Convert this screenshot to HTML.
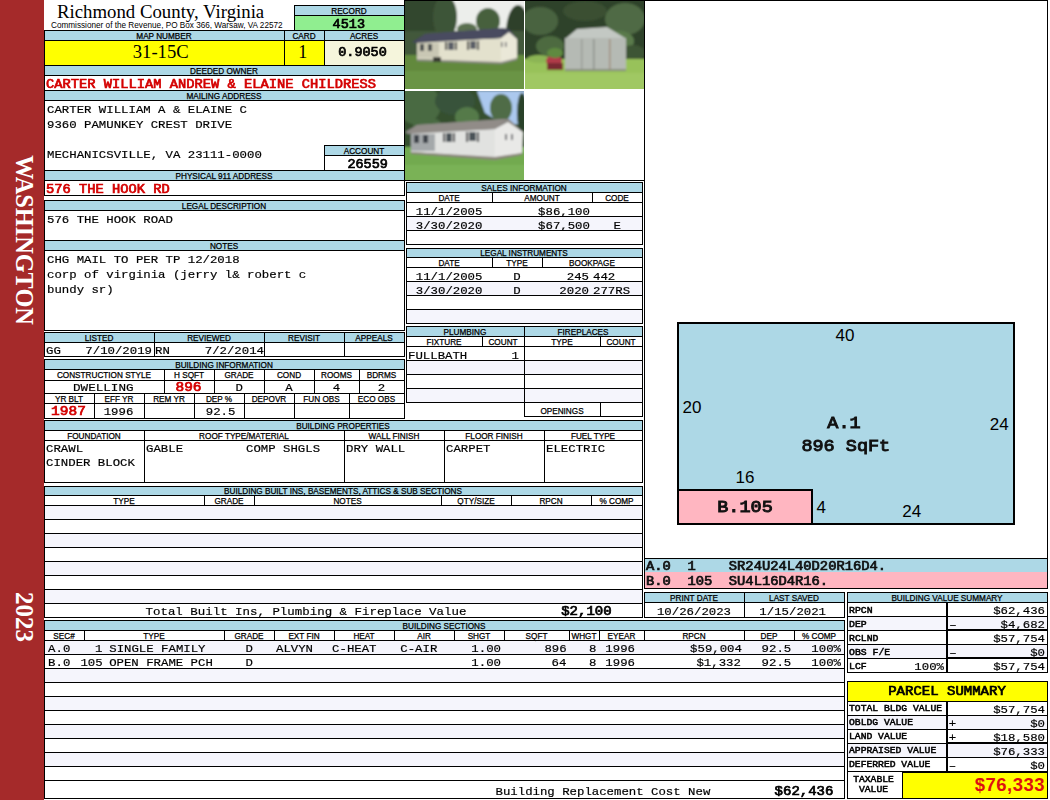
<!DOCTYPE html>
<html><head><meta charset="utf-8"><style>
html,body{margin:0;padding:0;background:#fff;overflow:hidden;}
body{width:1050px;height:800px;position:relative;overflow:hidden;}
body>div{position:absolute;}
</style></head><body>
<div style="left:0px;top:0px;width:44px;height:800px;background:#a52a2a"></div>
<div style="left:57px;top:-1px;width:237px;height:26px;line-height:26px;font-family:'Liberation Serif',serif;font-size:18.8px;font-weight:normal;color:#000;text-align:left;white-space:pre;">Richmond County, Virginia</div>
<div style="left:51px;top:20px;width:249px;height:11px;line-height:11px;font-family:'Liberation Sans',sans-serif;font-size:8.2px;font-weight:normal;color:#000;text-align:left;white-space:pre;">Commissioner of the Revenue, PO Box 366, Warsaw, VA 22572</div>
<div style="left:295px;top:6px;width:109px;height:9px;background:#add8e6"></div>
<div style="left:295px;top:16px;width:109px;height:14px;background:#90ee90"></div>
<div style="left:294px;top:5px;width:111px;height:1px;background:#000"></div>
<div style="left:294px;top:15px;width:111px;height:1px;background:#000"></div>
<div style="left:294px;top:5px;width:1px;height:26px;background:#000"></div>
<div style="left:294px;top:6px;width:110px;height:11px;line-height:11px;font-family:'Liberation Sans',sans-serif;font-size:8.2px;font-weight:normal;color:#000;text-align:center;white-space:pre;-webkit-text-stroke:0.25px #000;">RECORD</div>
<div style="left:248.80px;top:15px;width:200px;height:19px;line-height:19px;font-family:'Liberation Mono',monospace;font-size:13.5px;font-weight:normal;color:#000;text-align:center;white-space:pre;transform:scaleY(0.92);transform-origin:50% 13px;-webkit-text-stroke:0.74px #000;">4513</div>
<div style="left:45px;top:31px;width:359px;height:9px;background:#add8e6"></div>
<div style="left:45px;top:41px;width:279px;height:24px;background:#ffff00"></div>
<div style="left:325px;top:41px;width:79px;height:24px;background:#f5f5dc"></div>
<div style="left:44px;top:30px;width:361px;height:1px;background:#000"></div>
<div style="left:44px;top:40px;width:361px;height:1px;background:#000"></div>
<div style="left:44px;top:65px;width:361px;height:1px;background:#000"></div>
<div style="left:44px;top:30px;width:1px;height:36px;background:#000"></div>
<div style="left:284px;top:30px;width:1px;height:36px;background:#000"></div>
<div style="left:324px;top:30px;width:1px;height:36px;background:#000"></div>
<div style="left:44px;top:31px;width:240px;height:11px;line-height:11px;font-family:'Liberation Sans',sans-serif;font-size:8.2px;font-weight:normal;color:#000;text-align:center;white-space:pre;-webkit-text-stroke:0.25px #000;">MAP NUMBER</div>
<div style="left:284px;top:31px;width:40px;height:11px;line-height:11px;font-family:'Liberation Sans',sans-serif;font-size:8.2px;font-weight:normal;color:#000;text-align:center;white-space:pre;-webkit-text-stroke:0.25px #000;">CARD</div>
<div style="left:324px;top:31px;width:80px;height:11px;line-height:11px;font-family:'Liberation Sans',sans-serif;font-size:8.2px;font-weight:normal;color:#000;text-align:center;white-space:pre;-webkit-text-stroke:0.25px #000;">ACRES</div>
<div style="left:60.70px;top:39px;width:200px;height:26px;line-height:26px;font-family:'Liberation Serif',serif;font-size:18.6px;font-weight:normal;color:#000;text-align:center;white-space:pre;">31-15C</div>
<div style="left:202.70px;top:40px;width:200px;height:25px;line-height:25px;font-family:'Liberation Serif',serif;font-size:18px;font-weight:normal;color:#000;text-align:center;white-space:pre;">1</div>
<div style="left:262.50px;top:43px;width:200px;height:19px;line-height:19px;font-family:'Liberation Mono',monospace;font-size:13.5px;font-weight:normal;color:#000;text-align:center;white-space:pre;transform:scaleY(0.92);transform-origin:50% 13px;-webkit-text-stroke:0.74px #000;">0.9050</div>
<div style="left:45px;top:66px;width:359px;height:9px;background:#add8e6"></div>
<div style="left:44px;top:75px;width:361px;height:1px;background:#000"></div>
<div style="left:44px;top:90px;width:361px;height:1px;background:#000"></div>
<div style="left:44px;top:65px;width:1px;height:26px;background:#000"></div>
<div style="left:44px;top:66px;width:360px;height:11px;line-height:11px;font-family:'Liberation Sans',sans-serif;font-size:8.2px;font-weight:normal;color:#000;text-align:center;white-space:pre;-webkit-text-stroke:0.25px #000;">DEEDED OWNER</div>
<div style="left:46px;top:75px;width:358px;height:19px;line-height:19px;font-family:'Liberation Mono',monospace;font-size:13.75px;font-weight:normal;color:#d40000;text-align:left;white-space:pre;transform:scaleY(0.92);transform-origin:50% 13px;-webkit-text-stroke:0.76px #d40000;">CARTER WILLIAM ANDREW &amp; ELAINE CHILDRESS</div>
<div style="left:45px;top:91px;width:359px;height:9px;background:#add8e6"></div>
<div style="left:44px;top:100px;width:361px;height:1px;background:#000"></div>
<div style="left:44px;top:170px;width:361px;height:1px;background:#000"></div>
<div style="left:44px;top:90px;width:1px;height:106px;background:#000"></div>
<div style="left:44px;top:91px;width:360px;height:11px;line-height:11px;font-family:'Liberation Sans',sans-serif;font-size:8.2px;font-weight:normal;color:#000;text-align:center;white-space:pre;-webkit-text-stroke:0.25px #000;">MAILING ADDRESS</div>
<div style="left:47px;top:102px;width:357px;height:17px;line-height:17px;font-family:'Liberation Mono',monospace;font-size:12.35px;font-weight:normal;color:#000;text-align:left;white-space:pre;transform:scaleY(0.92);transform-origin:50% 11px;-webkit-text-stroke:0.2px #000;">CARTER WILLIAM A &amp; ELAINE C</div>
<div style="left:47px;top:117px;width:357px;height:17px;line-height:17px;font-family:'Liberation Mono',monospace;font-size:12.35px;font-weight:normal;color:#000;text-align:left;white-space:pre;transform:scaleY(0.92);transform-origin:50% 11px;-webkit-text-stroke:0.2px #000;">9360 PAMUNKEY CREST DRIVE</div>
<div style="left:47px;top:147px;width:357px;height:17px;line-height:17px;font-family:'Liberation Mono',monospace;font-size:12.35px;font-weight:normal;color:#000;text-align:left;white-space:pre;transform:scaleY(0.92);transform-origin:50% 11px;-webkit-text-stroke:0.2px #000;">MECHANICSVILLE, VA 23111-0000</div>
<div style="left:325px;top:146px;width:79px;height:9px;background:#add8e6"></div>
<div style="left:324px;top:145px;width:81px;height:1px;background:#000"></div>
<div style="left:324px;top:155px;width:81px;height:1px;background:#000"></div>
<div style="left:324px;top:145px;width:1px;height:26px;background:#000"></div>
<div style="left:324px;top:146px;width:80px;height:11px;line-height:11px;font-family:'Liberation Sans',sans-serif;font-size:8.2px;font-weight:normal;color:#000;text-align:center;white-space:pre;-webkit-text-stroke:0.25px #000;">ACCOUNT</div>
<div style="left:267.70px;top:155px;width:200px;height:19px;line-height:19px;font-family:'Liberation Mono',monospace;font-size:13.5px;font-weight:normal;color:#000;text-align:center;white-space:pre;transform:scaleY(0.92);transform-origin:50% 13px;-webkit-text-stroke:0.74px #000;">26559</div>
<div style="left:45px;top:171px;width:359px;height:9px;background:#add8e6"></div>
<div style="left:44px;top:180px;width:361px;height:1px;background:#000"></div>
<div style="left:44px;top:195px;width:361px;height:1px;background:#000"></div>
<div style="left:44px;top:171px;width:360px;height:11px;line-height:11px;font-family:'Liberation Sans',sans-serif;font-size:8.2px;font-weight:normal;color:#000;text-align:center;white-space:pre;-webkit-text-stroke:0.25px #000;">PHYSICAL 911 ADDRESS</div>
<div style="left:46px;top:180px;width:358px;height:19px;line-height:19px;font-family:'Liberation Mono',monospace;font-size:13.75px;font-weight:normal;color:#d40000;text-align:left;white-space:pre;transform:scaleY(0.92);transform-origin:50% 13px;-webkit-text-stroke:0.76px #d40000;">576 THE HOOK RD</div>
<div style="left:404px;top:0px;width:1px;height:196px;background:#000"></div>
<div style="left:45px;top:201px;width:359px;height:9px;background:#add8e6"></div>
<div style="left:45px;top:241px;width:359px;height:9px;background:#add8e6"></div>
<div style="left:44px;top:200px;width:361px;height:1px;background:#000"></div>
<div style="left:44px;top:210px;width:361px;height:1px;background:#000"></div>
<div style="left:44px;top:240px;width:361px;height:1px;background:#000"></div>
<div style="left:44px;top:250px;width:361px;height:1px;background:#000"></div>
<div style="left:44px;top:330px;width:361px;height:1px;background:#000"></div>
<div style="left:44px;top:200px;width:1px;height:131px;background:#000"></div>
<div style="left:404px;top:200px;width:1px;height:131px;background:#000"></div>
<div style="left:44px;top:201px;width:360px;height:11px;line-height:11px;font-family:'Liberation Sans',sans-serif;font-size:8.2px;font-weight:normal;color:#000;text-align:center;white-space:pre;-webkit-text-stroke:0.25px #000;">LEGAL DESCRIPTION</div>
<div style="left:47px;top:212px;width:357px;height:17px;line-height:17px;font-family:'Liberation Mono',monospace;font-size:12.35px;font-weight:normal;color:#000;text-align:left;white-space:pre;transform:scaleY(0.92);transform-origin:50% 11px;-webkit-text-stroke:0.2px #000;">576 THE HOOK ROAD</div>
<div style="left:44px;top:241px;width:360px;height:11px;line-height:11px;font-family:'Liberation Sans',sans-serif;font-size:8.2px;font-weight:normal;color:#000;text-align:center;white-space:pre;-webkit-text-stroke:0.25px #000;">NOTES</div>
<div style="left:47px;top:252px;width:357px;height:17px;line-height:17px;font-family:'Liberation Mono',monospace;font-size:12.35px;font-weight:normal;color:#000;text-align:left;white-space:pre;transform:scaleY(0.92);transform-origin:50% 11px;-webkit-text-stroke:0.2px #000;">CHG MAIL TO PER TP 12/2018</div>
<div style="left:47px;top:267px;width:357px;height:17px;line-height:17px;font-family:'Liberation Mono',monospace;font-size:12.35px;font-weight:normal;color:#000;text-align:left;white-space:pre;transform:scaleY(0.92);transform-origin:50% 11px;-webkit-text-stroke:0.2px #000;">corp of virginia (jerry l&amp; robert c</div>
<div style="left:47px;top:282px;width:357px;height:17px;line-height:17px;font-family:'Liberation Mono',monospace;font-size:12.35px;font-weight:normal;color:#000;text-align:left;white-space:pre;transform:scaleY(0.92);transform-origin:50% 11px;-webkit-text-stroke:0.2px #000;">bundy sr)</div>
<div style="left:45px;top:333px;width:359px;height:9px;background:#add8e6"></div>
<div style="left:44px;top:332px;width:361px;height:1px;background:#000"></div>
<div style="left:44px;top:342px;width:361px;height:1px;background:#000"></div>
<div style="left:44px;top:356px;width:361px;height:1px;background:#000"></div>
<div style="left:44px;top:332px;width:1px;height:25px;background:#000"></div>
<div style="left:154px;top:332px;width:1px;height:25px;background:#000"></div>
<div style="left:264px;top:332px;width:1px;height:25px;background:#000"></div>
<div style="left:344px;top:332px;width:1px;height:25px;background:#000"></div>
<div style="left:404px;top:332px;width:1px;height:25px;background:#000"></div>
<div style="left:44px;top:333px;width:110px;height:11px;line-height:11px;font-family:'Liberation Sans',sans-serif;font-size:8.2px;font-weight:normal;color:#000;text-align:center;white-space:pre;-webkit-text-stroke:0.25px #000;">LISTED</div>
<div style="left:154px;top:333px;width:110px;height:11px;line-height:11px;font-family:'Liberation Sans',sans-serif;font-size:8.2px;font-weight:normal;color:#000;text-align:center;white-space:pre;-webkit-text-stroke:0.25px #000;">REVIEWED</div>
<div style="left:264px;top:333px;width:80px;height:11px;line-height:11px;font-family:'Liberation Sans',sans-serif;font-size:8.2px;font-weight:normal;color:#000;text-align:center;white-space:pre;-webkit-text-stroke:0.25px #000;">REVISIT</div>
<div style="left:344px;top:333px;width:60px;height:11px;line-height:11px;font-family:'Liberation Sans',sans-serif;font-size:8.2px;font-weight:normal;color:#000;text-align:center;white-space:pre;-webkit-text-stroke:0.25px #000;">APPEALS</div>
<div style="left:46px;top:343px;width:108px;height:17px;line-height:17px;font-family:'Liberation Mono',monospace;font-size:12.35px;font-weight:normal;color:#000;text-align:left;white-space:pre;transform:scaleY(0.92);transform-origin:50% 11px;-webkit-text-stroke:0.2px #000;">GG</div>
<div style="left:60px;top:343px;width:92px;height:17px;line-height:17px;font-family:'Liberation Mono',monospace;font-size:12.35px;font-weight:normal;color:#000;text-align:right;white-space:pre;transform:scaleY(0.92);transform-origin:50% 11px;-webkit-text-stroke:0.2px #000;">7/10/2019</div>
<div style="left:155px;top:343px;width:109px;height:17px;line-height:17px;font-family:'Liberation Mono',monospace;font-size:12.35px;font-weight:normal;color:#000;text-align:left;white-space:pre;transform:scaleY(0.92);transform-origin:50% 11px;-webkit-text-stroke:0.2px #000;">RN</div>
<div style="left:170px;top:343px;width:94px;height:17px;line-height:17px;font-family:'Liberation Mono',monospace;font-size:12.35px;font-weight:normal;color:#000;text-align:right;white-space:pre;transform:scaleY(0.92);transform-origin:50% 11px;-webkit-text-stroke:0.2px #000;">7/2/2014</div>
<div style="left:45px;top:360px;width:359px;height:9px;background:#add8e6"></div>
<div style="left:44px;top:359px;width:361px;height:1px;background:#000"></div>
<div style="left:44px;top:369px;width:361px;height:1px;background:#000"></div>
<div style="left:44px;top:380px;width:361px;height:1px;background:#000"></div>
<div style="left:44px;top:393px;width:361px;height:1px;background:#000"></div>
<div style="left:44px;top:403px;width:361px;height:1px;background:#000"></div>
<div style="left:44px;top:418px;width:361px;height:1px;background:#000"></div>
<div style="left:44px;top:359px;width:1px;height:60px;background:#000"></div>
<div style="left:404px;top:359px;width:1px;height:60px;background:#000"></div>
<div style="left:164px;top:369px;width:1px;height:25px;background:#000"></div>
<div style="left:214px;top:369px;width:1px;height:25px;background:#000"></div>
<div style="left:264px;top:369px;width:1px;height:25px;background:#000"></div>
<div style="left:314px;top:369px;width:1px;height:25px;background:#000"></div>
<div style="left:359px;top:369px;width:1px;height:25px;background:#000"></div>
<div style="left:94px;top:393px;width:1px;height:26px;background:#000"></div>
<div style="left:144px;top:393px;width:1px;height:26px;background:#000"></div>
<div style="left:194px;top:393px;width:1px;height:26px;background:#000"></div>
<div style="left:244px;top:393px;width:1px;height:26px;background:#000"></div>
<div style="left:294px;top:393px;width:1px;height:26px;background:#000"></div>
<div style="left:349px;top:393px;width:1px;height:26px;background:#000"></div>
<div style="left:44px;top:360px;width:360px;height:11px;line-height:11px;font-family:'Liberation Sans',sans-serif;font-size:8.2px;font-weight:normal;color:#000;text-align:center;white-space:pre;-webkit-text-stroke:0.25px #000;">BUILDING INFORMATION</div>
<div style="left:44px;top:370px;width:120px;height:11px;line-height:11px;font-family:'Liberation Sans',sans-serif;font-size:8.2px;font-weight:normal;color:#000;text-align:center;white-space:pre;-webkit-text-stroke:0.25px #000;">CONSTRUCTION STYLE</div>
<div style="left:164px;top:370px;width:50px;height:11px;line-height:11px;font-family:'Liberation Sans',sans-serif;font-size:8.2px;font-weight:normal;color:#000;text-align:center;white-space:pre;-webkit-text-stroke:0.25px #000;">H SQFT</div>
<div style="left:214px;top:370px;width:50px;height:11px;line-height:11px;font-family:'Liberation Sans',sans-serif;font-size:8.2px;font-weight:normal;color:#000;text-align:center;white-space:pre;-webkit-text-stroke:0.25px #000;">GRADE</div>
<div style="left:264px;top:370px;width:50px;height:11px;line-height:11px;font-family:'Liberation Sans',sans-serif;font-size:8.2px;font-weight:normal;color:#000;text-align:center;white-space:pre;-webkit-text-stroke:0.25px #000;">COND</div>
<div style="left:314px;top:370px;width:45px;height:11px;line-height:11px;font-family:'Liberation Sans',sans-serif;font-size:8.2px;font-weight:normal;color:#000;text-align:center;white-space:pre;-webkit-text-stroke:0.25px #000;">ROOMS</div>
<div style="left:359px;top:370px;width:45px;height:11px;line-height:11px;font-family:'Liberation Sans',sans-serif;font-size:8.2px;font-weight:normal;color:#000;text-align:center;white-space:pre;-webkit-text-stroke:0.25px #000;">BDRMS</div>
<div style="left:3.30px;top:379px;width:200px;height:18px;line-height:18px;font-family:'Liberation Mono',monospace;font-size:12.6px;font-weight:normal;color:#000;text-align:center;white-space:pre;transform:scaleY(0.92);transform-origin:50% 12px;-webkit-text-stroke:0.2px #000;">DWELLING</div>
<div style="left:88.50px;top:377px;width:200px;height:20px;line-height:20px;font-family:'Liberation Mono',monospace;font-size:14.5px;font-weight:normal;color:#d40000;text-align:center;white-space:pre;transform:scaleY(0.92);transform-origin:50% 14px;-webkit-text-stroke:0.80px #d40000;">896</div>
<div style="left:139.20px;top:380px;width:200px;height:17px;line-height:17px;font-family:'Liberation Mono',monospace;font-size:12.35px;font-weight:normal;color:#000;text-align:center;white-space:pre;transform:scaleY(0.92);transform-origin:50% 11px;-webkit-text-stroke:0.2px #000;">D</div>
<div style="left:189.00px;top:380px;width:200px;height:17px;line-height:17px;font-family:'Liberation Mono',monospace;font-size:12.35px;font-weight:normal;color:#000;text-align:center;white-space:pre;transform:scaleY(0.92);transform-origin:50% 11px;-webkit-text-stroke:0.2px #000;">A</div>
<div style="left:236.50px;top:380px;width:200px;height:17px;line-height:17px;font-family:'Liberation Mono',monospace;font-size:12.35px;font-weight:normal;color:#000;text-align:center;white-space:pre;transform:scaleY(0.92);transform-origin:50% 11px;-webkit-text-stroke:0.2px #000;">4</div>
<div style="left:281.50px;top:380px;width:200px;height:17px;line-height:17px;font-family:'Liberation Mono',monospace;font-size:12.35px;font-weight:normal;color:#000;text-align:center;white-space:pre;transform:scaleY(0.92);transform-origin:50% 11px;-webkit-text-stroke:0.2px #000;">2</div>
<div style="left:44px;top:394px;width:50px;height:11px;line-height:11px;font-family:'Liberation Sans',sans-serif;font-size:8.2px;font-weight:normal;color:#000;text-align:center;white-space:pre;-webkit-text-stroke:0.25px #000;">YR BLT</div>
<div style="left:94px;top:394px;width:50px;height:11px;line-height:11px;font-family:'Liberation Sans',sans-serif;font-size:8.2px;font-weight:normal;color:#000;text-align:center;white-space:pre;-webkit-text-stroke:0.25px #000;">EFF YR</div>
<div style="left:144px;top:394px;width:50px;height:11px;line-height:11px;font-family:'Liberation Sans',sans-serif;font-size:8.2px;font-weight:normal;color:#000;text-align:center;white-space:pre;-webkit-text-stroke:0.25px #000;">REM YR</div>
<div style="left:194px;top:394px;width:50px;height:11px;line-height:11px;font-family:'Liberation Sans',sans-serif;font-size:8.2px;font-weight:normal;color:#000;text-align:center;white-space:pre;-webkit-text-stroke:0.25px #000;">DEP %</div>
<div style="left:244px;top:394px;width:50px;height:11px;line-height:11px;font-family:'Liberation Sans',sans-serif;font-size:8.2px;font-weight:normal;color:#000;text-align:center;white-space:pre;-webkit-text-stroke:0.25px #000;">DEPOVR</div>
<div style="left:294px;top:394px;width:55px;height:11px;line-height:11px;font-family:'Liberation Sans',sans-serif;font-size:8.2px;font-weight:normal;color:#000;text-align:center;white-space:pre;-webkit-text-stroke:0.25px #000;">FUN OBS</div>
<div style="left:349px;top:394px;width:55px;height:11px;line-height:11px;font-family:'Liberation Sans',sans-serif;font-size:8.2px;font-weight:normal;color:#000;text-align:center;white-space:pre;-webkit-text-stroke:0.25px #000;">ECO OBS</div>
<div style="left:-31.50px;top:401px;width:200px;height:20px;line-height:20px;font-family:'Liberation Mono',monospace;font-size:14.5px;font-weight:normal;color:#d40000;text-align:center;white-space:pre;transform:scaleY(0.92);transform-origin:50% 14px;-webkit-text-stroke:0.80px #d40000;">1987</div>
<div style="left:18.50px;top:404px;width:200px;height:17px;line-height:17px;font-family:'Liberation Mono',monospace;font-size:12.35px;font-weight:normal;color:#000;text-align:center;white-space:pre;transform:scaleY(0.92);transform-origin:50% 11px;-webkit-text-stroke:0.2px #000;">1996</div>
<div style="left:120.60px;top:404px;width:200px;height:17px;line-height:17px;font-family:'Liberation Mono',monospace;font-size:12.35px;font-weight:normal;color:#000;text-align:center;white-space:pre;transform:scaleY(0.92);transform-origin:50% 11px;-webkit-text-stroke:0.2px #000;">92.5</div>
<div style="left:45px;top:421px;width:597px;height:9px;background:#add8e6"></div>
<div style="left:44px;top:420px;width:599px;height:1px;background:#000"></div>
<div style="left:44px;top:430px;width:599px;height:1px;background:#000"></div>
<div style="left:44px;top:440px;width:599px;height:1px;background:#000"></div>
<div style="left:44px;top:482px;width:599px;height:1px;background:#000"></div>
<div style="left:44px;top:420px;width:1px;height:63px;background:#000"></div>
<div style="left:144px;top:430px;width:1px;height:53px;background:#000"></div>
<div style="left:344px;top:430px;width:1px;height:53px;background:#000"></div>
<div style="left:444px;top:430px;width:1px;height:53px;background:#000"></div>
<div style="left:544px;top:430px;width:1px;height:53px;background:#000"></div>
<div style="left:642px;top:420px;width:1px;height:63px;background:#000"></div>
<div style="left:44px;top:421px;width:598px;height:11px;line-height:11px;font-family:'Liberation Sans',sans-serif;font-size:8.2px;font-weight:normal;color:#000;text-align:center;white-space:pre;-webkit-text-stroke:0.25px #000;">BUILDING PROPERTIES</div>
<div style="left:44px;top:431px;width:100px;height:11px;line-height:11px;font-family:'Liberation Sans',sans-serif;font-size:8.2px;font-weight:normal;color:#000;text-align:center;white-space:pre;-webkit-text-stroke:0.25px #000;">FOUNDATION</div>
<div style="left:144px;top:431px;width:200px;height:11px;line-height:11px;font-family:'Liberation Sans',sans-serif;font-size:8.2px;font-weight:normal;color:#000;text-align:center;white-space:pre;-webkit-text-stroke:0.25px #000;">ROOF TYPE/MATERIAL</div>
<div style="left:344px;top:431px;width:100px;height:11px;line-height:11px;font-family:'Liberation Sans',sans-serif;font-size:8.2px;font-weight:normal;color:#000;text-align:center;white-space:pre;-webkit-text-stroke:0.25px #000;">WALL FINISH</div>
<div style="left:444px;top:431px;width:100px;height:11px;line-height:11px;font-family:'Liberation Sans',sans-serif;font-size:8.2px;font-weight:normal;color:#000;text-align:center;white-space:pre;-webkit-text-stroke:0.25px #000;">FLOOR FINISH</div>
<div style="left:544px;top:431px;width:98px;height:11px;line-height:11px;font-family:'Liberation Sans',sans-serif;font-size:8.2px;font-weight:normal;color:#000;text-align:center;white-space:pre;-webkit-text-stroke:0.25px #000;">FUEL TYPE</div>
<div style="left:46px;top:441px;width:98px;height:17px;line-height:17px;font-family:'Liberation Mono',monospace;font-size:12.35px;font-weight:normal;color:#000;text-align:left;white-space:pre;transform:scaleY(0.92);transform-origin:50% 11px;-webkit-text-stroke:0.2px #000;">CRAWL</div>
<div style="left:46px;top:455px;width:98px;height:17px;line-height:17px;font-family:'Liberation Mono',monospace;font-size:12.35px;font-weight:normal;color:#000;text-align:left;white-space:pre;transform:scaleY(0.92);transform-origin:50% 11px;-webkit-text-stroke:0.2px #000;">CINDER BLOCK</div>
<div style="left:146px;top:441px;width:198px;height:17px;line-height:17px;font-family:'Liberation Mono',monospace;font-size:12.35px;font-weight:normal;color:#000;text-align:left;white-space:pre;transform:scaleY(0.92);transform-origin:50% 11px;-webkit-text-stroke:0.2px #000;">GABLE</div>
<div style="left:246px;top:441px;width:98px;height:17px;line-height:17px;font-family:'Liberation Mono',monospace;font-size:12.35px;font-weight:normal;color:#000;text-align:left;white-space:pre;transform:scaleY(0.92);transform-origin:50% 11px;-webkit-text-stroke:0.2px #000;">COMP SHGLS</div>
<div style="left:346px;top:441px;width:98px;height:17px;line-height:17px;font-family:'Liberation Mono',monospace;font-size:12.35px;font-weight:normal;color:#000;text-align:left;white-space:pre;transform:scaleY(0.92);transform-origin:50% 11px;-webkit-text-stroke:0.2px #000;">DRY WALL</div>
<div style="left:446px;top:441px;width:98px;height:17px;line-height:17px;font-family:'Liberation Mono',monospace;font-size:12.35px;font-weight:normal;color:#000;text-align:left;white-space:pre;transform:scaleY(0.92);transform-origin:50% 11px;-webkit-text-stroke:0.2px #000;">CARPET</div>
<div style="left:546px;top:441px;width:96px;height:17px;line-height:17px;font-family:'Liberation Mono',monospace;font-size:12.35px;font-weight:normal;color:#000;text-align:left;white-space:pre;transform:scaleY(0.92);transform-origin:50% 11px;-webkit-text-stroke:0.2px #000;">ELECTRIC</div>
<div style="left:45px;top:487px;width:597px;height:8px;background:#add8e6"></div>
<div style="left:45px;top:506px;width:597px;height:13px;background:#f5f5fc"></div>
<div style="left:45px;top:534px;width:597px;height:13px;background:#f5f5fc"></div>
<div style="left:45px;top:562px;width:597px;height:13px;background:#f5f5fc"></div>
<div style="left:45px;top:590px;width:597px;height:13px;background:#f5f5fc"></div>
<div style="left:44px;top:486px;width:599px;height:1px;background:#000"></div>
<div style="left:44px;top:495px;width:599px;height:1px;background:#000"></div>
<div style="left:44px;top:505px;width:599px;height:1px;background:#000"></div>
<div style="left:44px;top:519px;width:599px;height:1px;background:#000"></div>
<div style="left:44px;top:533px;width:599px;height:1px;background:#000"></div>
<div style="left:44px;top:547px;width:599px;height:1px;background:#000"></div>
<div style="left:44px;top:561px;width:599px;height:1px;background:#000"></div>
<div style="left:44px;top:575px;width:599px;height:1px;background:#000"></div>
<div style="left:44px;top:589px;width:599px;height:1px;background:#000"></div>
<div style="left:44px;top:603px;width:599px;height:1px;background:#000"></div>
<div style="left:44px;top:617px;width:599px;height:1px;background:#000"></div>
<div style="left:44px;top:486px;width:1px;height:132px;background:#000"></div>
<div style="left:642px;top:486px;width:1px;height:132px;background:#000"></div>
<div style="left:204px;top:495px;width:1px;height:11px;background:#000"></div>
<div style="left:254px;top:495px;width:1px;height:11px;background:#000"></div>
<div style="left:441px;top:495px;width:1px;height:11px;background:#000"></div>
<div style="left:511px;top:495px;width:1px;height:11px;background:#000"></div>
<div style="left:591px;top:495px;width:1px;height:11px;background:#000"></div>
<div style="left:44px;top:486px;width:598px;height:11px;line-height:11px;font-family:'Liberation Sans',sans-serif;font-size:8.2px;font-weight:normal;color:#000;text-align:center;white-space:pre;-webkit-text-stroke:0.25px #000;">BUILDING BUILT INS, BASEMENTS, ATTICS &amp; SUB SECTIONS</div>
<div style="left:44px;top:496px;width:160px;height:11px;line-height:11px;font-family:'Liberation Sans',sans-serif;font-size:8.2px;font-weight:normal;color:#000;text-align:center;white-space:pre;-webkit-text-stroke:0.25px #000;">TYPE</div>
<div style="left:204px;top:496px;width:50px;height:11px;line-height:11px;font-family:'Liberation Sans',sans-serif;font-size:8.2px;font-weight:normal;color:#000;text-align:center;white-space:pre;-webkit-text-stroke:0.25px #000;">GRADE</div>
<div style="left:254px;top:496px;width:187px;height:11px;line-height:11px;font-family:'Liberation Sans',sans-serif;font-size:8.2px;font-weight:normal;color:#000;text-align:center;white-space:pre;-webkit-text-stroke:0.25px #000;">NOTES</div>
<div style="left:441px;top:496px;width:70px;height:11px;line-height:11px;font-family:'Liberation Sans',sans-serif;font-size:8.2px;font-weight:normal;color:#000;text-align:center;white-space:pre;-webkit-text-stroke:0.25px #000;">QTY/SIZE</div>
<div style="left:511px;top:496px;width:80px;height:11px;line-height:11px;font-family:'Liberation Sans',sans-serif;font-size:8.2px;font-weight:normal;color:#000;text-align:center;white-space:pre;-webkit-text-stroke:0.25px #000;">RPCN</div>
<div style="left:591px;top:496px;width:51px;height:11px;line-height:11px;font-family:'Liberation Sans',sans-serif;font-size:8.2px;font-weight:normal;color:#000;text-align:center;white-space:pre;-webkit-text-stroke:0.25px #000;">% COMP</div>
<div style="left:145.5px;top:604px;width:496.5px;height:17px;line-height:17px;font-family:'Liberation Mono',monospace;font-size:12.45px;font-weight:normal;color:#000;text-align:left;white-space:pre;transform:scaleY(0.92);transform-origin:50% 11px;-webkit-text-stroke:0.2px #000;">Total Built Ins, Plumbing &amp; Fireplace Value</div>
<div style="left:486.40px;top:601px;width:200px;height:20px;line-height:20px;font-family:'Liberation Mono',monospace;font-size:14px;font-weight:normal;color:#000;text-align:center;white-space:pre;transform:scaleY(0.92);transform-origin:50% 14px;-webkit-text-stroke:0.77px #000;">$2,100</div>
<div style="left:45px;top:621px;width:799px;height:9px;background:#add8e6"></div>
<div style="left:45px;top:641px;width:799px;height:13px;background:#f5f5fc"></div>
<div style="left:45px;top:669px;width:799px;height:13px;background:#f5f5fc"></div>
<div style="left:45px;top:697px;width:799px;height:13px;background:#f5f5fc"></div>
<div style="left:45px;top:725px;width:799px;height:13px;background:#f5f5fc"></div>
<div style="left:45px;top:753px;width:799px;height:13px;background:#f5f5fc"></div>
<div style="left:44px;top:620px;width:801px;height:1px;background:#000"></div>
<div style="left:44px;top:630px;width:801px;height:1px;background:#000"></div>
<div style="left:44px;top:640px;width:801px;height:1px;background:#000"></div>
<div style="left:44px;top:654px;width:801px;height:1px;background:#000"></div>
<div style="left:44px;top:668px;width:801px;height:1px;background:#000"></div>
<div style="left:44px;top:682px;width:801px;height:1px;background:#000"></div>
<div style="left:44px;top:696px;width:801px;height:1px;background:#000"></div>
<div style="left:44px;top:710px;width:801px;height:1px;background:#000"></div>
<div style="left:44px;top:724px;width:801px;height:1px;background:#000"></div>
<div style="left:44px;top:738px;width:801px;height:1px;background:#000"></div>
<div style="left:44px;top:752px;width:801px;height:1px;background:#000"></div>
<div style="left:44px;top:766px;width:801px;height:1px;background:#000"></div>
<div style="left:44px;top:780px;width:801px;height:1px;background:#000"></div>
<div style="left:44px;top:798px;width:801px;height:1px;background:#000"></div>
<div style="left:44px;top:620px;width:1px;height:179px;background:#000"></div>
<div style="left:844px;top:620px;width:1px;height:179px;background:#000"></div>
<div style="left:84px;top:630px;width:1px;height:11px;background:#000"></div>
<div style="left:224px;top:630px;width:1px;height:11px;background:#000"></div>
<div style="left:274px;top:630px;width:1px;height:11px;background:#000"></div>
<div style="left:334px;top:630px;width:1px;height:11px;background:#000"></div>
<div style="left:394px;top:630px;width:1px;height:11px;background:#000"></div>
<div style="left:454px;top:630px;width:1px;height:11px;background:#000"></div>
<div style="left:504px;top:630px;width:1px;height:11px;background:#000"></div>
<div style="left:569px;top:630px;width:1px;height:11px;background:#000"></div>
<div style="left:599px;top:630px;width:1px;height:11px;background:#000"></div>
<div style="left:644px;top:630px;width:1px;height:11px;background:#000"></div>
<div style="left:744px;top:630px;width:1px;height:11px;background:#000"></div>
<div style="left:794px;top:630px;width:1px;height:11px;background:#000"></div>
<div style="left:44px;top:621px;width:800px;height:11px;line-height:11px;font-family:'Liberation Sans',sans-serif;font-size:8.2px;font-weight:normal;color:#000;text-align:center;white-space:pre;-webkit-text-stroke:0.25px #000;">BUILDING SECTIONS</div>
<div style="left:44px;top:631px;width:40px;height:11px;line-height:11px;font-family:'Liberation Sans',sans-serif;font-size:8.2px;font-weight:normal;color:#000;text-align:center;white-space:pre;-webkit-text-stroke:0.25px #000;">SEC#</div>
<div style="left:84px;top:631px;width:140px;height:11px;line-height:11px;font-family:'Liberation Sans',sans-serif;font-size:8.2px;font-weight:normal;color:#000;text-align:center;white-space:pre;-webkit-text-stroke:0.25px #000;">TYPE</div>
<div style="left:224px;top:631px;width:50px;height:11px;line-height:11px;font-family:'Liberation Sans',sans-serif;font-size:8.2px;font-weight:normal;color:#000;text-align:center;white-space:pre;-webkit-text-stroke:0.25px #000;">GRADE</div>
<div style="left:274px;top:631px;width:60px;height:11px;line-height:11px;font-family:'Liberation Sans',sans-serif;font-size:8.2px;font-weight:normal;color:#000;text-align:center;white-space:pre;-webkit-text-stroke:0.25px #000;">EXT FIN</div>
<div style="left:334px;top:631px;width:60px;height:11px;line-height:11px;font-family:'Liberation Sans',sans-serif;font-size:8.2px;font-weight:normal;color:#000;text-align:center;white-space:pre;-webkit-text-stroke:0.25px #000;">HEAT</div>
<div style="left:394px;top:631px;width:60px;height:11px;line-height:11px;font-family:'Liberation Sans',sans-serif;font-size:8.2px;font-weight:normal;color:#000;text-align:center;white-space:pre;-webkit-text-stroke:0.25px #000;">AIR</div>
<div style="left:454px;top:631px;width:50px;height:11px;line-height:11px;font-family:'Liberation Sans',sans-serif;font-size:8.2px;font-weight:normal;color:#000;text-align:center;white-space:pre;-webkit-text-stroke:0.25px #000;">SHGT</div>
<div style="left:504px;top:631px;width:65px;height:11px;line-height:11px;font-family:'Liberation Sans',sans-serif;font-size:8.2px;font-weight:normal;color:#000;text-align:center;white-space:pre;-webkit-text-stroke:0.25px #000;">SQFT</div>
<div style="left:569px;top:631px;width:30px;height:11px;line-height:11px;font-family:'Liberation Sans',sans-serif;font-size:8.2px;font-weight:normal;color:#000;text-align:center;white-space:pre;-webkit-text-stroke:0.25px #000;">WHGT</div>
<div style="left:599px;top:631px;width:45px;height:11px;line-height:11px;font-family:'Liberation Sans',sans-serif;font-size:8.2px;font-weight:normal;color:#000;text-align:center;white-space:pre;-webkit-text-stroke:0.25px #000;">EYEAR</div>
<div style="left:644px;top:631px;width:100px;height:11px;line-height:11px;font-family:'Liberation Sans',sans-serif;font-size:8.2px;font-weight:normal;color:#000;text-align:center;white-space:pre;-webkit-text-stroke:0.25px #000;">RPCN</div>
<div style="left:744px;top:631px;width:50px;height:11px;line-height:11px;font-family:'Liberation Sans',sans-serif;font-size:8.2px;font-weight:normal;color:#000;text-align:center;white-space:pre;-webkit-text-stroke:0.25px #000;">DEP</div>
<div style="left:794px;top:631px;width:50px;height:11px;line-height:11px;font-family:'Liberation Sans',sans-serif;font-size:8.2px;font-weight:normal;color:#000;text-align:center;white-space:pre;-webkit-text-stroke:0.25px #000;">% COMP</div>
<div style="left:-40.80px;top:641px;width:200px;height:17px;line-height:17px;font-family:'Liberation Mono',monospace;font-size:12.35px;font-weight:normal;color:#000;text-align:center;white-space:pre;transform:scaleY(0.92);transform-origin:50% 11px;-webkit-text-stroke:0.2px #000;">A.0</div>
<div style="left:-1.30px;top:641px;width:200px;height:17px;line-height:17px;font-family:'Liberation Mono',monospace;font-size:12.35px;font-weight:normal;color:#000;text-align:center;white-space:pre;transform:scaleY(0.92);transform-origin:50% 11px;-webkit-text-stroke:0.2px #000;">1</div>
<div style="left:57.40px;top:641px;width:200px;height:17px;line-height:17px;font-family:'Liberation Mono',monospace;font-size:12.35px;font-weight:normal;color:#000;text-align:center;white-space:pre;transform:scaleY(0.92);transform-origin:50% 11px;-webkit-text-stroke:0.2px #000;">SINGLE FAMILY</div>
<div style="left:149.20px;top:641px;width:200px;height:17px;line-height:17px;font-family:'Liberation Mono',monospace;font-size:12.35px;font-weight:normal;color:#000;text-align:center;white-space:pre;transform:scaleY(0.92);transform-origin:50% 11px;-webkit-text-stroke:0.2px #000;">D</div>
<div style="left:194.50px;top:641px;width:200px;height:17px;line-height:17px;font-family:'Liberation Mono',monospace;font-size:12.35px;font-weight:normal;color:#000;text-align:center;white-space:pre;transform:scaleY(0.92);transform-origin:50% 11px;-webkit-text-stroke:0.2px #000;">ALVYN</div>
<div style="left:254.30px;top:641px;width:200px;height:17px;line-height:17px;font-family:'Liberation Mono',monospace;font-size:12.35px;font-weight:normal;color:#000;text-align:center;white-space:pre;transform:scaleY(0.92);transform-origin:50% 11px;-webkit-text-stroke:0.2px #000;">C-HEAT</div>
<div style="left:318.80px;top:641px;width:200px;height:17px;line-height:17px;font-family:'Liberation Mono',monospace;font-size:12.35px;font-weight:normal;color:#000;text-align:center;white-space:pre;transform:scaleY(0.92);transform-origin:50% 11px;-webkit-text-stroke:0.2px #000;">C-AIR</div>
<div style="left:386.20px;top:641px;width:200px;height:17px;line-height:17px;font-family:'Liberation Mono',monospace;font-size:12.35px;font-weight:normal;color:#000;text-align:center;white-space:pre;transform:scaleY(0.92);transform-origin:50% 11px;-webkit-text-stroke:0.2px #000;">1.00</div>
<div style="left:455.50px;top:641px;width:200px;height:17px;line-height:17px;font-family:'Liberation Mono',monospace;font-size:12.35px;font-weight:normal;color:#000;text-align:center;white-space:pre;transform:scaleY(0.92);transform-origin:50% 11px;-webkit-text-stroke:0.2px #000;">896</div>
<div style="left:492.80px;top:641px;width:200px;height:17px;line-height:17px;font-family:'Liberation Mono',monospace;font-size:12.35px;font-weight:normal;color:#000;text-align:center;white-space:pre;transform:scaleY(0.92);transform-origin:50% 11px;-webkit-text-stroke:0.2px #000;">8</div>
<div style="left:520.20px;top:641px;width:200px;height:17px;line-height:17px;font-family:'Liberation Mono',monospace;font-size:12.35px;font-weight:normal;color:#000;text-align:center;white-space:pre;transform:scaleY(0.92);transform-origin:50% 11px;-webkit-text-stroke:0.2px #000;">1996</div>
<div style="left:616.00px;top:641px;width:200px;height:17px;line-height:17px;font-family:'Liberation Mono',monospace;font-size:12.35px;font-weight:normal;color:#000;text-align:center;white-space:pre;transform:scaleY(0.92);transform-origin:50% 11px;-webkit-text-stroke:0.2px #000;">$59,004</div>
<div style="left:676.40px;top:641px;width:200px;height:17px;line-height:17px;font-family:'Liberation Mono',monospace;font-size:12.35px;font-weight:normal;color:#000;text-align:center;white-space:pre;transform:scaleY(0.92);transform-origin:50% 11px;-webkit-text-stroke:0.2px #000;">92.5</div>
<div style="left:726.20px;top:641px;width:200px;height:17px;line-height:17px;font-family:'Liberation Mono',monospace;font-size:12.35px;font-weight:normal;color:#000;text-align:center;white-space:pre;transform:scaleY(0.92);transform-origin:50% 11px;-webkit-text-stroke:0.2px #000;">100%</div>
<div style="left:-40.80px;top:655px;width:200px;height:17px;line-height:17px;font-family:'Liberation Mono',monospace;font-size:12.35px;font-weight:normal;color:#000;text-align:center;white-space:pre;transform:scaleY(0.92);transform-origin:50% 11px;-webkit-text-stroke:0.2px #000;">B.0</div>
<div style="left:-8.50px;top:655px;width:200px;height:17px;line-height:17px;font-family:'Liberation Mono',monospace;font-size:12.35px;font-weight:normal;color:#000;text-align:center;white-space:pre;transform:scaleY(0.92);transform-origin:50% 11px;-webkit-text-stroke:0.2px #000;">105</div>
<div style="left:61.00px;top:655px;width:200px;height:17px;line-height:17px;font-family:'Liberation Mono',monospace;font-size:12.35px;font-weight:normal;color:#000;text-align:center;white-space:pre;transform:scaleY(0.92);transform-origin:50% 11px;-webkit-text-stroke:0.2px #000;">OPEN FRAME PCH</div>
<div style="left:149.20px;top:655px;width:200px;height:17px;line-height:17px;font-family:'Liberation Mono',monospace;font-size:12.35px;font-weight:normal;color:#000;text-align:center;white-space:pre;transform:scaleY(0.92);transform-origin:50% 11px;-webkit-text-stroke:0.2px #000;">D</div>
<div style="left:386.20px;top:655px;width:200px;height:17px;line-height:17px;font-family:'Liberation Mono',monospace;font-size:12.35px;font-weight:normal;color:#000;text-align:center;white-space:pre;transform:scaleY(0.92);transform-origin:50% 11px;-webkit-text-stroke:0.2px #000;">1.00</div>
<div style="left:459.00px;top:655px;width:200px;height:17px;line-height:17px;font-family:'Liberation Mono',monospace;font-size:12.35px;font-weight:normal;color:#000;text-align:center;white-space:pre;transform:scaleY(0.92);transform-origin:50% 11px;-webkit-text-stroke:0.2px #000;">64</div>
<div style="left:492.80px;top:655px;width:200px;height:17px;line-height:17px;font-family:'Liberation Mono',monospace;font-size:12.35px;font-weight:normal;color:#000;text-align:center;white-space:pre;transform:scaleY(0.92);transform-origin:50% 11px;-webkit-text-stroke:0.2px #000;">8</div>
<div style="left:520.20px;top:655px;width:200px;height:17px;line-height:17px;font-family:'Liberation Mono',monospace;font-size:12.35px;font-weight:normal;color:#000;text-align:center;white-space:pre;transform:scaleY(0.92);transform-origin:50% 11px;-webkit-text-stroke:0.2px #000;">1996</div>
<div style="left:618.70px;top:655px;width:200px;height:17px;line-height:17px;font-family:'Liberation Mono',monospace;font-size:12.35px;font-weight:normal;color:#000;text-align:center;white-space:pre;transform:scaleY(0.92);transform-origin:50% 11px;-webkit-text-stroke:0.2px #000;">$1,332</div>
<div style="left:676.40px;top:655px;width:200px;height:17px;line-height:17px;font-family:'Liberation Mono',monospace;font-size:12.35px;font-weight:normal;color:#000;text-align:center;white-space:pre;transform:scaleY(0.92);transform-origin:50% 11px;-webkit-text-stroke:0.2px #000;">92.5</div>
<div style="left:726.20px;top:655px;width:200px;height:17px;line-height:17px;font-family:'Liberation Mono',monospace;font-size:12.35px;font-weight:normal;color:#000;text-align:center;white-space:pre;transform:scaleY(0.92);transform-origin:50% 11px;-webkit-text-stroke:0.2px #000;">100%</div>
<div style="left:495.5px;top:784px;width:348.5px;height:17px;line-height:17px;font-family:'Liberation Mono',monospace;font-size:12.35px;font-weight:normal;color:#000;text-align:left;white-space:pre;transform:scaleY(0.92);transform-origin:50% 11px;-webkit-text-stroke:0.2px #000;">Building Replacement Cost New</div>
<div style="left:704.00px;top:781px;width:200px;height:20px;line-height:20px;font-family:'Liberation Mono',monospace;font-size:14px;font-weight:normal;color:#000;text-align:center;white-space:pre;transform:scaleY(0.92);transform-origin:50% 14px;-webkit-text-stroke:0.77px #000;">$62,436</div>
<div style="left:407px;top:183px;width:235px;height:9px;background:#add8e6"></div>
<div style="left:407px;top:217px;width:235px;height:13px;background:#f5f5fc"></div>
<div style="left:406px;top:182px;width:237px;height:1px;background:#000"></div>
<div style="left:406px;top:192px;width:237px;height:1px;background:#000"></div>
<div style="left:406px;top:202px;width:237px;height:1px;background:#000"></div>
<div style="left:406px;top:216px;width:237px;height:1px;background:#000"></div>
<div style="left:406px;top:230px;width:237px;height:1px;background:#000"></div>
<div style="left:406px;top:244px;width:237px;height:1px;background:#000"></div>
<div style="left:406px;top:182px;width:1px;height:63px;background:#000"></div>
<div style="left:642px;top:182px;width:1px;height:63px;background:#000"></div>
<div style="left:492px;top:192px;width:1px;height:11px;background:#000"></div>
<div style="left:592px;top:192px;width:1px;height:11px;background:#000"></div>
<div style="left:406px;top:183px;width:236px;height:11px;line-height:11px;font-family:'Liberation Sans',sans-serif;font-size:8.2px;font-weight:normal;color:#000;text-align:center;white-space:pre;-webkit-text-stroke:0.25px #000;">SALES INFORMATION</div>
<div style="left:406px;top:193px;width:86px;height:11px;line-height:11px;font-family:'Liberation Sans',sans-serif;font-size:8.2px;font-weight:normal;color:#000;text-align:center;white-space:pre;-webkit-text-stroke:0.25px #000;">DATE</div>
<div style="left:492px;top:193px;width:100px;height:11px;line-height:11px;font-family:'Liberation Sans',sans-serif;font-size:8.2px;font-weight:normal;color:#000;text-align:center;white-space:pre;-webkit-text-stroke:0.25px #000;">AMOUNT</div>
<div style="left:592px;top:193px;width:50px;height:11px;line-height:11px;font-family:'Liberation Sans',sans-serif;font-size:8.2px;font-weight:normal;color:#000;text-align:center;white-space:pre;-webkit-text-stroke:0.25px #000;">CODE</div>
<div style="left:349.10px;top:204px;width:200px;height:17px;line-height:17px;font-family:'Liberation Mono',monospace;font-size:12.35px;font-weight:normal;color:#000;text-align:center;white-space:pre;transform:scaleY(0.92);transform-origin:50% 11px;-webkit-text-stroke:0.2px #000;">11/1/2005</div>
<div style="left:464.00px;top:204px;width:200px;height:17px;line-height:17px;font-family:'Liberation Mono',monospace;font-size:12.35px;font-weight:normal;color:#000;text-align:center;white-space:pre;transform:scaleY(0.92);transform-origin:50% 11px;-webkit-text-stroke:0.2px #000;">$86,100</div>
<div style="left:349.10px;top:218px;width:200px;height:17px;line-height:17px;font-family:'Liberation Mono',monospace;font-size:12.35px;font-weight:normal;color:#000;text-align:center;white-space:pre;transform:scaleY(0.92);transform-origin:50% 11px;-webkit-text-stroke:0.2px #000;">3/30/2020</div>
<div style="left:464.00px;top:218px;width:200px;height:17px;line-height:17px;font-family:'Liberation Mono',monospace;font-size:12.35px;font-weight:normal;color:#000;text-align:center;white-space:pre;transform:scaleY(0.92);transform-origin:50% 11px;-webkit-text-stroke:0.2px #000;">$67,500</div>
<div style="left:517.10px;top:218px;width:200px;height:17px;line-height:17px;font-family:'Liberation Mono',monospace;font-size:12.35px;font-weight:normal;color:#000;text-align:center;white-space:pre;transform:scaleY(0.92);transform-origin:50% 11px;-webkit-text-stroke:0.2px #000;">E</div>
<div style="left:407px;top:249px;width:235px;height:8px;background:#add8e6"></div>
<div style="left:407px;top:282px;width:235px;height:13px;background:#f5f5fc"></div>
<div style="left:407px;top:310px;width:235px;height:13px;background:#f5f5fc"></div>
<div style="left:406px;top:248px;width:237px;height:1px;background:#000"></div>
<div style="left:406px;top:257px;width:237px;height:1px;background:#000"></div>
<div style="left:406px;top:267px;width:237px;height:1px;background:#000"></div>
<div style="left:406px;top:281px;width:237px;height:1px;background:#000"></div>
<div style="left:406px;top:295px;width:237px;height:1px;background:#000"></div>
<div style="left:406px;top:309px;width:237px;height:1px;background:#000"></div>
<div style="left:406px;top:323px;width:237px;height:1px;background:#000"></div>
<div style="left:406px;top:248px;width:1px;height:76px;background:#000"></div>
<div style="left:642px;top:248px;width:1px;height:76px;background:#000"></div>
<div style="left:492px;top:257px;width:1px;height:11px;background:#000"></div>
<div style="left:542px;top:257px;width:1px;height:11px;background:#000"></div>
<div style="left:406px;top:248px;width:236px;height:11px;line-height:11px;font-family:'Liberation Sans',sans-serif;font-size:8.2px;font-weight:normal;color:#000;text-align:center;white-space:pre;-webkit-text-stroke:0.25px #000;">LEGAL INSTRUMENTS</div>
<div style="left:406px;top:258px;width:86px;height:11px;line-height:11px;font-family:'Liberation Sans',sans-serif;font-size:8.2px;font-weight:normal;color:#000;text-align:center;white-space:pre;-webkit-text-stroke:0.25px #000;">DATE</div>
<div style="left:492px;top:258px;width:50px;height:11px;line-height:11px;font-family:'Liberation Sans',sans-serif;font-size:8.2px;font-weight:normal;color:#000;text-align:center;white-space:pre;-webkit-text-stroke:0.25px #000;">TYPE</div>
<div style="left:542px;top:258px;width:100px;height:11px;line-height:11px;font-family:'Liberation Sans',sans-serif;font-size:8.2px;font-weight:normal;color:#000;text-align:center;white-space:pre;-webkit-text-stroke:0.25px #000;">BOOKPAGE</div>
<div style="left:349.10px;top:269px;width:200px;height:17px;line-height:17px;font-family:'Liberation Mono',monospace;font-size:12.35px;font-weight:normal;color:#000;text-align:center;white-space:pre;transform:scaleY(0.92);transform-origin:50% 11px;-webkit-text-stroke:0.2px #000;">11/1/2005</div>
<div style="left:417.00px;top:269px;width:200px;height:17px;line-height:17px;font-family:'Liberation Mono',monospace;font-size:12.35px;font-weight:normal;color:#000;text-align:center;white-space:pre;transform:scaleY(0.92);transform-origin:50% 11px;-webkit-text-stroke:0.2px #000;">D</div>
<div style="left:500px;top:269px;width:89px;height:17px;line-height:17px;font-family:'Liberation Mono',monospace;font-size:12.35px;font-weight:normal;color:#000;text-align:right;white-space:pre;transform:scaleY(0.92);transform-origin:50% 11px;-webkit-text-stroke:0.2px #000;">245</div>
<div style="left:593px;top:269px;width:49px;height:17px;line-height:17px;font-family:'Liberation Mono',monospace;font-size:12.35px;font-weight:normal;color:#000;text-align:left;white-space:pre;transform:scaleY(0.92);transform-origin:50% 11px;-webkit-text-stroke:0.2px #000;">442</div>
<div style="left:349.10px;top:283px;width:200px;height:17px;line-height:17px;font-family:'Liberation Mono',monospace;font-size:12.35px;font-weight:normal;color:#000;text-align:center;white-space:pre;transform:scaleY(0.92);transform-origin:50% 11px;-webkit-text-stroke:0.2px #000;">3/30/2020</div>
<div style="left:417.00px;top:283px;width:200px;height:17px;line-height:17px;font-family:'Liberation Mono',monospace;font-size:12.35px;font-weight:normal;color:#000;text-align:center;white-space:pre;transform:scaleY(0.92);transform-origin:50% 11px;-webkit-text-stroke:0.2px #000;">D</div>
<div style="left:500px;top:283px;width:89px;height:17px;line-height:17px;font-family:'Liberation Mono',monospace;font-size:12.35px;font-weight:normal;color:#000;text-align:right;white-space:pre;transform:scaleY(0.92);transform-origin:50% 11px;-webkit-text-stroke:0.2px #000;">2020</div>
<div style="left:593px;top:283px;width:49px;height:17px;line-height:17px;font-family:'Liberation Mono',monospace;font-size:12.35px;font-weight:normal;color:#000;text-align:left;white-space:pre;transform:scaleY(0.92);transform-origin:50% 11px;-webkit-text-stroke:0.2px #000;">277RS</div>
<div style="left:407px;top:327px;width:235px;height:9px;background:#add8e6"></div>
<div style="left:407px;top:361px;width:235px;height:13px;background:#f5f5fc"></div>
<div style="left:407px;top:389px;width:235px;height:13px;background:#f5f5fc"></div>
<div style="left:406px;top:326px;width:237px;height:1px;background:#000"></div>
<div style="left:406px;top:336px;width:237px;height:1px;background:#000"></div>
<div style="left:406px;top:346px;width:237px;height:1px;background:#000"></div>
<div style="left:406px;top:360px;width:237px;height:1px;background:#000"></div>
<div style="left:406px;top:374px;width:237px;height:1px;background:#000"></div>
<div style="left:406px;top:388px;width:237px;height:1px;background:#000"></div>
<div style="left:406px;top:402px;width:237px;height:1px;background:#000"></div>
<div style="left:524px;top:416px;width:119px;height:1px;background:#000"></div>
<div style="left:406px;top:326px;width:1px;height:77px;background:#000"></div>
<div style="left:642px;top:326px;width:1px;height:91px;background:#000"></div>
<div style="left:524px;top:326px;width:1px;height:91px;background:#000"></div>
<div style="left:482px;top:336px;width:1px;height:11px;background:#000"></div>
<div style="left:600px;top:336px;width:1px;height:11px;background:#000"></div>
<div style="left:600px;top:402px;width:1px;height:15px;background:#000"></div>
<div style="left:406px;top:327px;width:118px;height:11px;line-height:11px;font-family:'Liberation Sans',sans-serif;font-size:8.2px;font-weight:normal;color:#000;text-align:center;white-space:pre;-webkit-text-stroke:0.25px #000;">PLUMBING</div>
<div style="left:524px;top:327px;width:118px;height:11px;line-height:11px;font-family:'Liberation Sans',sans-serif;font-size:8.2px;font-weight:normal;color:#000;text-align:center;white-space:pre;-webkit-text-stroke:0.25px #000;">FIREPLACES</div>
<div style="left:406px;top:337px;width:76px;height:11px;line-height:11px;font-family:'Liberation Sans',sans-serif;font-size:8.2px;font-weight:normal;color:#000;text-align:center;white-space:pre;-webkit-text-stroke:0.25px #000;">FIXTURE</div>
<div style="left:482px;top:337px;width:42px;height:11px;line-height:11px;font-family:'Liberation Sans',sans-serif;font-size:8.2px;font-weight:normal;color:#000;text-align:center;white-space:pre;-webkit-text-stroke:0.25px #000;">COUNT</div>
<div style="left:524px;top:337px;width:76px;height:11px;line-height:11px;font-family:'Liberation Sans',sans-serif;font-size:8.2px;font-weight:normal;color:#000;text-align:center;white-space:pre;-webkit-text-stroke:0.25px #000;">TYPE</div>
<div style="left:600px;top:337px;width:42px;height:11px;line-height:11px;font-family:'Liberation Sans',sans-serif;font-size:8.2px;font-weight:normal;color:#000;text-align:center;white-space:pre;-webkit-text-stroke:0.25px #000;">COUNT</div>
<div style="left:408px;top:348px;width:116px;height:17px;line-height:17px;font-family:'Liberation Mono',monospace;font-size:12.35px;font-weight:normal;color:#000;text-align:left;white-space:pre;transform:scaleY(0.92);transform-origin:50% 11px;-webkit-text-stroke:0.2px #000;">FULLBATH</div>
<div style="left:415.20px;top:348px;width:200px;height:17px;line-height:17px;font-family:'Liberation Mono',monospace;font-size:12.35px;font-weight:normal;color:#000;text-align:center;white-space:pre;transform:scaleY(0.92);transform-origin:50% 11px;-webkit-text-stroke:0.2px #000;">1</div>
<div style="left:524px;top:406px;width:76px;height:11px;line-height:11px;font-family:'Liberation Sans',sans-serif;font-size:8.2px;font-weight:normal;color:#000;text-align:center;white-space:pre;-webkit-text-stroke:0.25px #000;">OPENINGS</div>
<div style="left:405px;top:1px;width:119px;height:88px;overflow:hidden"><svg width="119" height="88" viewBox="0 0 119 88"><defs><filter id="bl4051" x="-5%" y="-5%" width="110%" height="110%"><feGaussianBlur stdDeviation="0.9"/></filter></defs><g filter="url(#bl4051)">
<rect x="-2" y="-2" width="124" height="94" fill="#eceeeb"/>
<ellipse cx="18" cy="14" rx="30" ry="34" fill="#33462e"/>
<ellipse cx="40" cy="16" rx="12" ry="22" fill="#3e5438"/>
<ellipse cx="8" cy="48" rx="14" ry="14" fill="#2f432b"/>
<ellipse cx="83" cy="20" rx="12" ry="13" fill="#46603e"/>
<ellipse cx="62" cy="28" rx="10" ry="6" fill="#5a7050"/>
<ellipse cx="113" cy="32" rx="12" ry="28" fill="#2e4129"/>
<rect x="-2" y="30" width="124" height="26" fill="#42593b"/>
<rect x="-2" y="54" width="124" height="38" fill="#62893e"/>
<rect x="-2" y="70" width="124" height="22" fill="#6a9444"/>
<polygon points="12,41 96,37 111,38 112,57 96,62 12,58" fill="#e3e1cd"/>
<polygon points="96,37 104,29 112,38 112,57 96,62" fill="#eae8d8"/>
<polygon points="7,41 20,33 98,27 104,28 113,39 104,31 96,37 10,42" fill="#44465a"/>
<polygon points="20,33 98,27 96,37 10,41" fill="#4a4c60"/>
<rect x="12" y="42" width="22" height="15" fill="#c9c7b4"/>
<rect x="15" y="43" width="4" height="7" fill="#4a4d50"/>
<rect x="23" y="43" width="4" height="7" fill="#4a4d50"/>
<rect x="40" y="41" width="2" height="8" fill="#2a2a35"/>
<rect x="43" y="41" width="6" height="8" fill="#5c6068"/>
<rect x="50" y="41" width="2" height="8" fill="#2a2a35"/>
<rect x="62" y="40" width="2" height="9" fill="#2a2a35"/>
<rect x="65" y="40" width="6" height="8" fill="#5c6068"/>
<rect x="72" y="40" width="2" height="9" fill="#2a2a35"/>
<rect x="96" y="41" width="1.5" height="5" fill="#6a6a70"/>
<rect x="100" y="41" width="1.5" height="5" fill="#6a6a70"/>
<polygon points="12,58 96,61 112,57 112,59 96,63 12,60" fill="#8d8c84"/>
<rect x="28" y="56" width="8" height="5" fill="#3a3d35"/>
</g></svg></div>
<div style="left:525px;top:1px;width:119px;height:88px;overflow:hidden"><svg width="119" height="88" viewBox="0 0 119 88"><defs><filter id="bl5251" x="-5%" y="-5%" width="110%" height="110%"><feGaussianBlur stdDeviation="0.9"/></filter></defs><g filter="url(#bl5251)">
<rect x="-2" y="-2" width="124" height="94" fill="#2f4229"/>
<ellipse cx="15" cy="20" rx="18" ry="14" fill="#4a6440"/>
<ellipse cx="60" cy="10" rx="22" ry="10" fill="#3a5033"/>
<ellipse cx="100" cy="18" rx="20" ry="16" fill="#4f6b45"/>
<ellipse cx="95" cy="40" rx="14" ry="10" fill="#5a7a4c"/>
<ellipse cx="25" cy="45" rx="14" ry="10" fill="#4d6a40"/>
<ellipse cx="108" cy="52" rx="12" ry="8" fill="#3e5535"/>
<rect x="-2" y="58" width="124" height="34" fill="#98c25a"/>
<rect x="-2" y="72" width="124" height="20" fill="#a0c863"/>
<ellipse cx="14" cy="58" rx="12" ry="4" fill="#8cb555"/>
<polygon points="40,38 52,28 82,26 100,37" fill="#c3c8c3"/>
<rect x="40" y="37" width="61" height="31" fill="#b5bab4"/>
<rect x="56" y="38" width="1.5" height="30" fill="#9a9e98"/>
<rect x="68" y="38" width="1.5" height="30" fill="#8e928c"/>
<rect x="84" y="38" width="1.5" height="30" fill="#a08f80"/>
<polygon points="40,68 101,68 101,70 40,70" fill="#8a8e80"/>
<ellipse cx="29" cy="60" rx="8" ry="6" fill="#b03a48"/>
<rect x="22" y="62" width="16" height="7" fill="#7a2a30"/>
<ellipse cx="30" cy="52" rx="8" ry="5" fill="#5e8a40"/>
</g></svg></div>
<div style="left:405px;top:91px;width:119px;height:89px;overflow:hidden"><svg width="119" height="89" viewBox="0 0 119 89"><defs><filter id="bl40591" x="-5%" y="-5%" width="110%" height="110%"><feGaussianBlur stdDeviation="0.9"/></filter></defs><g filter="url(#bl40591)">
<rect x="-2" y="-2" width="124" height="94" fill="#34502f"/>
<ellipse cx="14" cy="14" rx="22" ry="20" fill="#4a6a42"/>
<ellipse cx="22" cy="34" rx="14" ry="8" fill="#4a6a42"/>
<ellipse cx="50" cy="10" rx="20" ry="14" fill="#37523a"/>
<ellipse cx="62" cy="26" rx="12" ry="10" fill="#557a4a"/>
<polygon points="72,0 121,0 121,34 96,32 80,22" fill="#abc8ee"/>
<ellipse cx="96" cy="17" rx="11" ry="14" fill="#4f6c47"/>
<ellipse cx="117" cy="22" rx="5" ry="20" fill="#2c4229"/>
<rect x="-2" y="56" width="124" height="36" fill="#72aa50"/>
<rect x="-2" y="74" width="124" height="18" fill="#7ab257"/>
<polygon points="6,40 92,37 117,40 117,62 90,67 6,61" fill="#e1e2e0"/>
<polygon points="90,37 102,29 118,41 117,62 90,67" fill="#e9e9e7"/>
<polygon points="0,41 12,34 100,28 104,28 119,42 103,31 90,38 3,43" fill="#8a8784"/>
<polygon points="12,34 100,28 90,38 3,42" fill="#918c88"/>
<rect x="6" y="43" width="24" height="17" fill="#a4a8aa"/>
<rect x="9" y="44" width="5" height="8" fill="#3d4248"/>
<rect x="18" y="44" width="5" height="8" fill="#3d4248"/>
<rect x="38" y="42" width="2" height="9" fill="#25282e"/>
<rect x="41" y="42" width="6" height="9" fill="#4c5258"/>
<rect x="48" y="42" width="2" height="9" fill="#25282e"/>
<rect x="61" y="41" width="2" height="10" fill="#25282e"/>
<rect x="64" y="41" width="7" height="9" fill="#4c5258"/>
<rect x="72" y="41" width="2" height="10" fill="#25282e"/>
<rect x="100" y="43" width="2" height="6" fill="#6c6c70"/>
<rect x="106" y="43" width="2" height="6" fill="#6c6c70"/>
<polygon points="6,61 90,66 117,62 117,64 90,69 6,63" fill="#8a847a"/>
</g></svg></div>
<div style="left:404px;top:0px;width:644px;height:1px;background:#000"></div>
<div style="left:404px;top:180px;width:241px;height:1px;background:#000"></div>
<div style="left:644px;top:0px;width:1px;height:589px;background:#000"></div>
<div style="left:1047px;top:0px;width:1px;height:589px;background:#000"></div>
<div style="left:644px;top:558px;width:404px;height:1px;background:#000"></div>
<div style="left:644px;top:588px;width:404px;height:1px;background:#000"></div>
<div style="left:645px;top:559px;width:402px;height:13px;background:#add8e6"></div>
<div style="left:645px;top:572px;width:402px;height:16px;background:#ffb6c1"></div>
<div style="left:646px;top:557px;width:401px;height:19px;line-height:19px;font-family:'Liberation Mono',monospace;font-size:13.8px;font-weight:normal;color:#111;text-align:left;white-space:pre;transform:scaleY(0.92);transform-origin:50% 13px;-webkit-text-stroke:0.76px #111;">A.0  1    SR24U24L40D20R16D4.</div>
<div style="left:646px;top:572px;width:401px;height:19px;line-height:19px;font-family:'Liberation Mono',monospace;font-size:13.8px;font-weight:normal;color:#111;text-align:left;white-space:pre;transform:scaleY(0.92);transform-origin:50% 13px;-webkit-text-stroke:0.76px #111;">B.0  105  SU4L16D4R16.</div>
<div style="left:678px;top:323px;width:336px;height:201px;background:#add8e6"></div>
<div style="left:678px;top:490px;width:133px;height:33px;background:#ffb6c1"></div>
<div style="left:677px;top:322px;width:338px;height:2px;background:#000"></div>
<div style="left:677px;top:523px;width:338px;height:2px;background:#000"></div>
<div style="left:677px;top:322px;width:2px;height:203px;background:#000"></div>
<div style="left:1013px;top:322px;width:2px;height:203px;background:#000"></div>
<div style="left:677px;top:489px;width:136px;height:2px;background:#000"></div>
<div style="left:811px;top:489px;width:2px;height:36px;background:#000"></div>
<div style="left:745.00px;top:324px;width:200px;height:24px;line-height:24px;font-family:'Liberation Sans',sans-serif;font-size:17px;font-weight:normal;color:#000;text-align:center;white-space:pre;">40</div>
<div style="left:592.00px;top:396px;width:200px;height:24px;line-height:24px;font-family:'Liberation Sans',sans-serif;font-size:17px;font-weight:normal;color:#000;text-align:center;white-space:pre;">20</div>
<div style="left:899.20px;top:413px;width:200px;height:24px;line-height:24px;font-family:'Liberation Sans',sans-serif;font-size:17px;font-weight:normal;color:#000;text-align:center;white-space:pre;">24</div>
<div style="left:645.00px;top:466px;width:200px;height:24px;line-height:24px;font-family:'Liberation Sans',sans-serif;font-size:17px;font-weight:normal;color:#000;text-align:center;white-space:pre;">16</div>
<div style="left:721.30px;top:496px;width:200px;height:24px;line-height:24px;font-family:'Liberation Sans',sans-serif;font-size:17px;font-weight:normal;color:#000;text-align:center;white-space:pre;">4</div>
<div style="left:811.80px;top:500px;width:200px;height:24px;line-height:24px;font-family:'Liberation Sans',sans-serif;font-size:17px;font-weight:normal;color:#000;text-align:center;white-space:pre;">24</div>
<div style="left:744.00px;top:411px;width:200px;height:26px;line-height:26px;font-family:'Liberation Mono',monospace;font-size:18.5px;font-weight:normal;color:#111;text-align:center;white-space:pre;transform:scaleY(0.92);transform-origin:50% 17px;-webkit-text-stroke:1.02px #111;">A.1</div>
<div style="left:745.80px;top:434px;width:200px;height:26px;line-height:26px;font-family:'Liberation Mono',monospace;font-size:18.5px;font-weight:normal;color:#111;text-align:center;white-space:pre;transform:scaleY(0.92);transform-origin:50% 17px;-webkit-text-stroke:1.02px #111;">896 SqFt</div>
<div style="left:645.00px;top:495px;width:200px;height:26px;line-height:26px;font-family:'Liberation Mono',monospace;font-size:18.5px;font-weight:normal;color:#111;text-align:center;white-space:pre;transform:scaleY(0.92);transform-origin:50% 17px;-webkit-text-stroke:1.02px #111;">B.105</div>
<div style="left:645px;top:593px;width:199px;height:9px;background:#add8e6"></div>
<div style="left:644px;top:592px;width:201px;height:1px;background:#000"></div>
<div style="left:644px;top:602px;width:201px;height:1px;background:#000"></div>
<div style="left:644px;top:617px;width:201px;height:1px;background:#000"></div>
<div style="left:644px;top:592px;width:1px;height:26px;background:#000"></div>
<div style="left:744px;top:592px;width:1px;height:26px;background:#000"></div>
<div style="left:844px;top:592px;width:1px;height:26px;background:#000"></div>
<div style="left:644px;top:593px;width:100px;height:11px;line-height:11px;font-family:'Liberation Sans',sans-serif;font-size:8.2px;font-weight:normal;color:#000;text-align:center;white-space:pre;-webkit-text-stroke:0.25px #000;">PRINT DATE</div>
<div style="left:744px;top:593px;width:100px;height:11px;line-height:11px;font-family:'Liberation Sans',sans-serif;font-size:8.2px;font-weight:normal;color:#000;text-align:center;white-space:pre;-webkit-text-stroke:0.25px #000;">LAST SAVED</div>
<div style="left:594.00px;top:604px;width:200px;height:17px;line-height:17px;font-family:'Liberation Mono',monospace;font-size:12.35px;font-weight:normal;color:#000;text-align:center;white-space:pre;transform:scaleY(0.92);transform-origin:50% 11px;-webkit-text-stroke:0.2px #000;">10/26/2023</div>
<div style="left:692.70px;top:604px;width:200px;height:17px;line-height:17px;font-family:'Liberation Mono',monospace;font-size:12.35px;font-weight:normal;color:#000;text-align:center;white-space:pre;transform:scaleY(0.92);transform-origin:50% 11px;-webkit-text-stroke:0.2px #000;">1/15/2021</div>
<div style="left:848px;top:593px;width:199px;height:9px;background:#add8e6"></div>
<div style="left:848px;top:617px;width:199px;height:13px;background:#f5f5fc"></div>
<div style="left:848px;top:645px;width:199px;height:13px;background:#f5f5fc"></div>
<div style="left:847px;top:592px;width:201px;height:1px;background:#000"></div>
<div style="left:847px;top:602px;width:201px;height:1px;background:#000"></div>
<div style="left:847px;top:616px;width:201px;height:1px;background:#000"></div>
<div style="left:847px;top:644px;width:201px;height:1px;background:#000"></div>
<div style="left:847px;top:672px;width:201px;height:1px;background:#000"></div>
<div style="left:847px;top:630px;width:201px;height:1px;background:#000"></div>
<div style="left:847px;top:658px;width:201px;height:1px;background:#000"></div>
<div style="left:946px;top:629px;width:102px;height:2px;background:#000"></div>
<div style="left:946px;top:657px;width:102px;height:2px;background:#000"></div>
<div style="left:847px;top:592px;width:1px;height:81px;background:#000"></div>
<div style="left:1047px;top:592px;width:1px;height:81px;background:#000"></div>
<div style="left:946px;top:602px;width:2px;height:71px;background:#000"></div>
<div style="left:847px;top:593px;width:200px;height:11px;line-height:11px;font-family:'Liberation Sans',sans-serif;font-size:8.2px;font-weight:normal;color:#000;text-align:center;white-space:pre;-webkit-text-stroke:0.25px #000;">BUILDING VALUE SUMMARY</div>
<div style="left:849px;top:604px;width:98px;height:14px;line-height:14px;font-family:'Liberation Mono',monospace;font-size:9.8px;font-weight:normal;color:#000;text-align:left;white-space:pre;transform:scaleY(0.92);transform-origin:50% 9px;-webkit-text-stroke:0.54px #000;">RPCN</div>
<div style="left:950px;top:603px;width:95px;height:17px;line-height:17px;font-family:'Liberation Mono',monospace;font-size:12.35px;font-weight:normal;color:#000;text-align:right;white-space:pre;transform:scaleY(0.92);transform-origin:50% 11px;-webkit-text-stroke:0.2px #000;">$62,436</div>
<div style="left:849px;top:618px;width:98px;height:14px;line-height:14px;font-family:'Liberation Mono',monospace;font-size:9.8px;font-weight:normal;color:#000;text-align:left;white-space:pre;transform:scaleY(0.92);transform-origin:50% 9px;-webkit-text-stroke:0.54px #000;">DEP</div>
<div style="left:853.00px;top:617px;width:200px;height:17px;line-height:17px;font-family:'Liberation Mono',monospace;font-size:12.35px;font-weight:normal;color:#000;text-align:center;white-space:pre;transform:scaleY(0.92);transform-origin:50% 11px;-webkit-text-stroke:0.2px #000;">&#8211;</div>
<div style="left:950px;top:617px;width:95px;height:17px;line-height:17px;font-family:'Liberation Mono',monospace;font-size:12.35px;font-weight:normal;color:#000;text-align:right;white-space:pre;transform:scaleY(0.92);transform-origin:50% 11px;-webkit-text-stroke:0.2px #000;">$4,682</div>
<div style="left:849px;top:632px;width:98px;height:14px;line-height:14px;font-family:'Liberation Mono',monospace;font-size:9.8px;font-weight:normal;color:#000;text-align:left;white-space:pre;transform:scaleY(0.92);transform-origin:50% 9px;-webkit-text-stroke:0.54px #000;">RCLND</div>
<div style="left:950px;top:631px;width:95px;height:17px;line-height:17px;font-family:'Liberation Mono',monospace;font-size:12.35px;font-weight:normal;color:#000;text-align:right;white-space:pre;transform:scaleY(0.92);transform-origin:50% 11px;-webkit-text-stroke:0.2px #000;">$57,754</div>
<div style="left:849px;top:646px;width:98px;height:14px;line-height:14px;font-family:'Liberation Mono',monospace;font-size:9.8px;font-weight:normal;color:#000;text-align:left;white-space:pre;transform:scaleY(0.92);transform-origin:50% 9px;-webkit-text-stroke:0.54px #000;">OBS F/E</div>
<div style="left:853.00px;top:645px;width:200px;height:17px;line-height:17px;font-family:'Liberation Mono',monospace;font-size:12.35px;font-weight:normal;color:#000;text-align:center;white-space:pre;transform:scaleY(0.92);transform-origin:50% 11px;-webkit-text-stroke:0.2px #000;">&#8211;</div>
<div style="left:950px;top:645px;width:95px;height:17px;line-height:17px;font-family:'Liberation Mono',monospace;font-size:12.35px;font-weight:normal;color:#000;text-align:right;white-space:pre;transform:scaleY(0.92);transform-origin:50% 11px;-webkit-text-stroke:0.2px #000;">$0</div>
<div style="left:849px;top:660px;width:98px;height:14px;line-height:14px;font-family:'Liberation Mono',monospace;font-size:9.8px;font-weight:normal;color:#000;text-align:left;white-space:pre;transform:scaleY(0.92);transform-origin:50% 9px;-webkit-text-stroke:0.54px #000;">LCF</div>
<div style="left:950px;top:659px;width:95px;height:17px;line-height:17px;font-family:'Liberation Mono',monospace;font-size:12.35px;font-weight:normal;color:#000;text-align:right;white-space:pre;transform:scaleY(0.92);transform-origin:50% 11px;-webkit-text-stroke:0.2px #000;">$57,754</div>
<div style="left:850px;top:659px;width:94px;height:17px;line-height:17px;font-family:'Liberation Mono',monospace;font-size:12.35px;font-weight:normal;color:#000;text-align:right;white-space:pre;transform:scaleY(0.92);transform-origin:50% 11px;-webkit-text-stroke:0.2px #000;">100%</div>
<div style="left:848px;top:682px;width:199px;height:19px;background:#ffff00"></div>
<div style="left:848px;top:716px;width:199px;height:13px;background:#f5f5fc"></div>
<div style="left:848px;top:744px;width:199px;height:13px;background:#f5f5fc"></div>
<div style="left:903px;top:773px;width:144px;height:25px;background:#ffff00"></div>
<div style="left:847px;top:681px;width:201px;height:1px;background:#000"></div>
<div style="left:847px;top:701px;width:201px;height:1px;background:#000"></div>
<div style="left:847px;top:715px;width:201px;height:1px;background:#000"></div>
<div style="left:847px;top:729px;width:201px;height:1px;background:#000"></div>
<div style="left:847px;top:757px;width:201px;height:1px;background:#000"></div>
<div style="left:847px;top:798px;width:201px;height:1px;background:#000"></div>
<div style="left:847px;top:743px;width:201px;height:1px;background:#000"></div>
<div style="left:847px;top:771px;width:201px;height:1px;background:#000"></div>
<div style="left:946px;top:742px;width:102px;height:2px;background:#000"></div>
<div style="left:902px;top:771px;width:146px;height:2px;background:#000"></div>
<div style="left:847px;top:681px;width:1px;height:118px;background:#000"></div>
<div style="left:1047px;top:681px;width:1px;height:118px;background:#000"></div>
<div style="left:946px;top:701px;width:2px;height:71px;background:#000"></div>
<div style="left:902px;top:771px;width:1px;height:28px;background:#000"></div>
<div style="left:847.00px;top:681px;width:200px;height:20px;line-height:20px;font-family:'Liberation Mono',monospace;font-size:14px;font-weight:normal;color:#000;text-align:center;white-space:pre;transform:scaleY(0.92);transform-origin:50% 14px;-webkit-text-stroke:0.77px #000;">PARCEL SUMMARY</div>
<div style="left:849px;top:702px;width:98px;height:14px;line-height:14px;font-family:'Liberation Mono',monospace;font-size:9.7px;font-weight:normal;color:#000;text-align:left;white-space:pre;transform:scaleY(0.92);transform-origin:50% 9px;-webkit-text-stroke:0.53px #000;">TOTAL BLDG VALUE</div>
<div style="left:950px;top:702px;width:95px;height:17px;line-height:17px;font-family:'Liberation Mono',monospace;font-size:12.35px;font-weight:normal;color:#000;text-align:right;white-space:pre;transform:scaleY(0.92);transform-origin:50% 11px;-webkit-text-stroke:0.2px #000;">$57,754</div>
<div style="left:849px;top:716px;width:98px;height:14px;line-height:14px;font-family:'Liberation Mono',monospace;font-size:9.7px;font-weight:normal;color:#000;text-align:left;white-space:pre;transform:scaleY(0.92);transform-origin:50% 9px;-webkit-text-stroke:0.53px #000;">OBLDG VALUE</div>
<div style="left:852.50px;top:716px;width:200px;height:17px;line-height:17px;font-family:'Liberation Mono',monospace;font-size:12.35px;font-weight:normal;color:#000;text-align:center;white-space:pre;transform:scaleY(0.92);transform-origin:50% 11px;-webkit-text-stroke:0.2px #000;">+</div>
<div style="left:950px;top:716px;width:95px;height:17px;line-height:17px;font-family:'Liberation Mono',monospace;font-size:12.35px;font-weight:normal;color:#000;text-align:right;white-space:pre;transform:scaleY(0.92);transform-origin:50% 11px;-webkit-text-stroke:0.2px #000;">$0</div>
<div style="left:849px;top:730px;width:98px;height:14px;line-height:14px;font-family:'Liberation Mono',monospace;font-size:9.7px;font-weight:normal;color:#000;text-align:left;white-space:pre;transform:scaleY(0.92);transform-origin:50% 9px;-webkit-text-stroke:0.53px #000;">LAND VALUE</div>
<div style="left:852.50px;top:730px;width:200px;height:17px;line-height:17px;font-family:'Liberation Mono',monospace;font-size:12.35px;font-weight:normal;color:#000;text-align:center;white-space:pre;transform:scaleY(0.92);transform-origin:50% 11px;-webkit-text-stroke:0.2px #000;">+</div>
<div style="left:950px;top:730px;width:95px;height:17px;line-height:17px;font-family:'Liberation Mono',monospace;font-size:12.35px;font-weight:normal;color:#000;text-align:right;white-space:pre;transform:scaleY(0.92);transform-origin:50% 11px;-webkit-text-stroke:0.2px #000;">$18,580</div>
<div style="left:849px;top:744px;width:98px;height:14px;line-height:14px;font-family:'Liberation Mono',monospace;font-size:9.7px;font-weight:normal;color:#000;text-align:left;white-space:pre;transform:scaleY(0.92);transform-origin:50% 9px;-webkit-text-stroke:0.53px #000;">APPRAISED VALUE</div>
<div style="left:950px;top:744px;width:95px;height:17px;line-height:17px;font-family:'Liberation Mono',monospace;font-size:12.35px;font-weight:normal;color:#000;text-align:right;white-space:pre;transform:scaleY(0.92);transform-origin:50% 11px;-webkit-text-stroke:0.2px #000;">$76,333</div>
<div style="left:849px;top:758px;width:98px;height:14px;line-height:14px;font-family:'Liberation Mono',monospace;font-size:9.7px;font-weight:normal;color:#000;text-align:left;white-space:pre;transform:scaleY(0.92);transform-origin:50% 9px;-webkit-text-stroke:0.53px #000;">DEFERRED VALUE</div>
<div style="left:852.50px;top:758px;width:200px;height:17px;line-height:17px;font-family:'Liberation Mono',monospace;font-size:12.35px;font-weight:normal;color:#000;text-align:center;white-space:pre;transform:scaleY(0.92);transform-origin:50% 11px;-webkit-text-stroke:0.2px #000;">&#8211;</div>
<div style="left:950px;top:758px;width:95px;height:17px;line-height:17px;font-family:'Liberation Mono',monospace;font-size:12.35px;font-weight:normal;color:#000;text-align:right;white-space:pre;transform:scaleY(0.92);transform-origin:50% 11px;-webkit-text-stroke:0.2px #000;">$0</div>
<div style="left:773.50px;top:773px;width:200px;height:14px;line-height:14px;font-family:'Liberation Mono',monospace;font-size:9.7px;font-weight:normal;color:#000;text-align:center;white-space:pre;transform:scaleY(0.92);transform-origin:50% 9px;-webkit-text-stroke:0.53px #000;">TAXABLE</div>
<div style="left:773.50px;top:783px;width:200px;height:14px;line-height:14px;font-family:'Liberation Mono',monospace;font-size:9.7px;font-weight:normal;color:#000;text-align:center;white-space:pre;transform:scaleY(0.92);transform-origin:50% 9px;-webkit-text-stroke:0.53px #000;">VALUE</div>
<div style="left:903px;top:772px;width:142px;height:26px;line-height:26px;font-family:'Liberation Sans',sans-serif;font-size:18.5px;font-weight:bold;color:#dd1111;text-align:right;white-space:pre;letter-spacing:0.5px;">$76,333</div>
<div style="left:-66px;top:225px;width:180px;height:30px;line-height:30px;transform:rotate(90deg);font-family:'Liberation Serif',serif;font-size:24.3px;font-weight:bold;color:#fff;text-align:center;white-space:pre">WASHINGTON</div>
<div style="left:-22px;top:602px;width:92px;height:30px;line-height:30px;transform:rotate(90deg);font-family:'Liberation Serif',serif;font-size:25px;font-weight:bold;color:#fff;text-align:center;white-space:pre">2023</div>
</body></html>
